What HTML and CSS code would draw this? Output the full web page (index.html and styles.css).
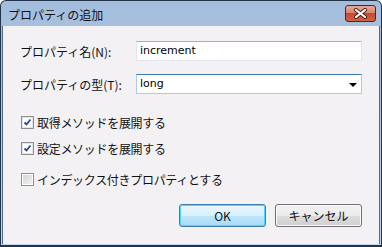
FILE: index.html
```html
<!DOCTYPE html>
<html lang="ja">

<head>
  <meta charset="UTF-8" />
  <title>プロパティの追加</title>
  <link rel="stylesheet" href="styles.css">
</head>

<body>

  <div class="window">
    <div class="titlebar">
      <span class="title">プロパティの追加</span>
      <button class="close-btn" aria-label="閉じる">
        <svg width="15" height="11" viewBox="0 0 15 11">
          <path d="M3 2 L12 9 M12 2 L3 9" stroke="#4a1a14" stroke-width="4" stroke-linecap="round" />
          <path d="M3 2 L12 9 M12 2 L3 9" stroke="#ffffff" stroke-width="2.2" stroke-linecap="round" />
        </svg>
      </button>
    </div>

    <div class="content">
      <div class="form-row">
        <label class="field-label">プロパティ名(N):</label>
        <div class="text-box">increment</div>
      </div>
      <div class="form-row">
        <label class="field-label">プロパティの型(T):</label>
        <div class="combo-box">
          <span>long</span>
          <span class="combo-arrow"></span>
        </div>
      </div>

      <div class="check-row first">
        <span class="check-box checked">
          <svg width="9" height="9" viewBox="0 0 9 9">
            <path d="M1.5 4.5 L3.5 6.5 L7.5 1.5" fill="none" stroke="#22469a" stroke-width="1.8" />
          </svg>
        </span>
        <span>取得メソッドを展開する</span>
      </div>
      <div class="check-row">
        <span class="check-box checked">
          <svg width="9" height="9" viewBox="0 0 9 9">
            <path d="M1.5 4.5 L3.5 6.5 L7.5 1.5" fill="none" stroke="#22469a" stroke-width="1.8" />
          </svg>
        </span>
        <span>設定メソッドを展開する</span>
      </div>
      <div class="check-row spaced">
        <span class="check-box"></span>
        <span>インデックス付きプロパティとする</span>
      </div>

      <div class="button-row">
        <button class="dlg-btn default">OK</button>
        <button class="dlg-btn">キャンセル</button>
      </div>
    </div>
  </div>

</body>

</html>
```

FILE: styles.css
```css
body {
  margin: 0;
  font-family: 'Noto Sans CJK JP', sans-serif;
  font-size: 12px;
  background: #ffffff;
}

.window {
  width: 382px;
  height: 247px;
  box-sizing: border-box;
  border: 1px solid #22334a;
  border-bottom-width: 2px;
  border-radius: 6px 6px 0 0;
  background: linear-gradient(to bottom, #a3bddc 0%, #b4cbe7 60%, #c2d8f0 100%);
  padding: 0 1px 1px 1px;
  display: flex;
  flex-direction: column;
}

.titlebar {
  height: 25px;
  display: flex;
  align-items: flex-start;
  justify-content: space-between;
  padding: 0 4px 0 6px;
}

.title {
  line-height: 13px;
  margin-top: 7px;
  color: #111;
  font-size: 12px;
}

.close-btn {
  margin-top: 4px;
  width: 31px;
  height: 17px;
  padding: 0;
  border: 1px solid #5a201b;
  border-radius: 3px;
  background: linear-gradient(to bottom, #e6a898 0%, #d98570 45%, #c34a32 50%, #cf6248 100%);
  display: flex;
  align-items: center;
  justify-content: center;
}

.content {
  flex: 1;
  display: flex;
  flex-direction: column;
  background: #f4f1f5;
  border-left: 1px solid #4f6b8c;
  border-right: 1px solid #4f6b8c;
  padding: 15px 17px 0 17px;
}

.form-row {
  display: flex;
  align-items: center;
  height: 20px;
  margin-bottom: 13px;
}

.field-label {
  width: 116px;
  color: #111;
}

.text-box,
.combo-box {
  flex: 1;
  height: 20px;
  box-sizing: border-box;
  background: #fff;
  font-family: 'DejaVu Sans', sans-serif;
  font-size: 11px;
  line-height: 18px;
  padding-left: 3px;
  color: #000;
}

.text-box {
  border: 1px solid #e2e6ec;
  border-top-color: #abadb3;
}

.combo-box {
  border: 1px solid #a8cde6;
  border-top-color: #3d7bad;
  display: flex;
  align-items: center;
  justify-content: space-between;
  padding-right: 4px;
}

.combo-arrow {
  width: 0;
  height: 0;
  border-left: 4px solid transparent;
  border-right: 4px solid transparent;
  border-top: 4px solid #000;
  margin-top: 1px;
}

.check-row {
  display: flex;
  align-items: center;
  height: 13px;
  margin-left: 1px;
  margin-top: 13px;
  color: #111;
  letter-spacing: -0.3px;
}

.check-row.first {
  margin-top: 9px;
}

.check-row.spaced {
  margin-top: 18px;
}

.check-box {
  width: 13px;
  height: 13px;
  box-sizing: border-box;
  border: 1px solid #8f8f8f;
  margin-right: 3px;
  display: flex;
  align-items: center;
  justify-content: center;
  background: linear-gradient(135deg, #d2d2d2 0%, #f4f4f4 100%);
  box-shadow: inset 0 0 0 1px #ffffff;
}

.check-box.checked {
  background: #fff;
  box-shadow: inset 0 0 0 1px #e4e4e4;
}

.button-row {
  display: flex;
  justify-content: flex-end;
  gap: 9px;
  margin-top: 18px;
}

.dlg-btn {
  width: 87px;
  height: 23px;
  font-family: 'Noto Sans CJK JP', sans-serif;
  font-size: 12px;
  color: #111;
  border: 1px solid #707070;
  border-radius: 3px;
  background: linear-gradient(to bottom, #f2f2f2 0%, #ebebeb 50%, #dddddd 51%, #cfcfcf 100%);
  box-shadow: inset 0 0 0 1px #fbfbfb;
  padding: 0;
}

.dlg-btn.default {
  border-color: #3c7fb1;
  background: linear-gradient(to bottom, #eaf6fd 0%, #d9f0fc 50%, #bee6fd 51%, #a7d9f5 100%);
  box-shadow: inset 0 0 0 1px #48d8fb;
}
```
